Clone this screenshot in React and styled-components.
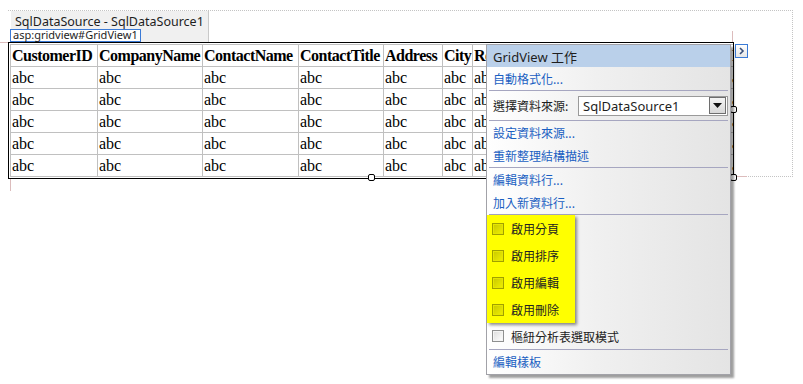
import React from 'react';
import styled, { createGlobalStyle } from 'styled-components';

const GlobalStyle = createGlobalStyle`
  html, body {
    margin: 0;
    padding: 0;
    background: #ffffff;
  }
  body {
    font-family: "Noto Sans", "Noto Sans CJK TC", sans-serif;
  }
`;

const columns = [
  { name: 'CustomerID', width: 87 },
  { name: 'CompanyName', width: 105 },
  { name: 'ContactName', width: 96 },
  { name: 'ContactTitle', width: 85 },
  { name: 'Address', width: 59 },
  { name: 'City', width: 30 },
  { name: 'Region', width: 60 },
  { name: 'PostalCode', width: 84 },
  { name: 'Country', width: 62 },
  { name: 'Phone', width: 52 },
  { name: 'Fax', width: 40 },
];

const tableWidth = columns.reduce((s, c) => s + c.width, 0);

const rows = [0, 1, 2, 3, 4];

export default function App() {
  return (
    <Page>
      <GlobalStyle />
      <Canvas>
        <Guide style={{ left: -8, top: 31, width: 10, height: 1 }} />
        <Guide style={{ left: 724, top: 20, width: 1, height: 12 }} />
        <Guide style={{ left: 727, top: 165, width: 12, height: 1 }} />
        <Guide style={{ left: 2, top: 167, width: 1, height: 13 }} />

        <Tab>
          SqlDataSource - SqlDataSource1
          <Tag>asp:gridview#GridView1</Tag>
        </Tab>

        <FrameWrap>
          <Frame>
            <Grid style={{ width: tableWidth }}>
              <colgroup>
                {columns.map((c) => (
                  <col key={c.name} style={{ width: c.width }} />
                ))}
              </colgroup>
              <thead>
                <tr>
                  {columns.map((c) => (
                    <th key={c.name}>{c.name}</th>
                  ))}
                </tr>
              </thead>
              <tbody>
                {rows.map((r) => (
                  <tr key={r}>
                    {columns.map((c) => (
                      <td key={c.name}>abc</td>
                    ))}
                  </tr>
                ))}
              </tbody>
            </Grid>
          </Frame>
          <Handle $x={360} $y={132} />
          <Handle $x={722} $y={64} />
          <Handle $x={722} $y={132} />
        </FrameWrap>
      </Canvas>

      <SmartTag>
        <svg width="11" height="12" viewBox="0 0 11 12">
          <polyline points="4,3 7,6 4,9" fill="none" stroke="#3a4f78" strokeWidth="1.6" />
        </svg>
      </SmartTag>

      <TaskPanel>
        <PanelHeader>GridView 工作</PanelHeader>
        <LinkItem>自動格式化...</LinkItem>
        <Separator />
        <SelectRow>
          <SelectLabel>選擇資料來源:</SelectLabel>
          <Select>
            <span>SqlDataSource1</span>
            <DropButton>
              <svg width="9" height="5" viewBox="0 0 9 5">
                <polygon points="0,0 9,0 4.5,5" fill="#111" />
              </svg>
            </DropButton>
          </Select>
        </SelectRow>
        <Separator />
        <LinkItem>設定資料來源...</LinkItem>
        <LinkItem>重新整理結構描述</LinkItem>
        <Separator />
        <LinkItem>編輯資料行...</LinkItem>
        <LinkItem>加入新資料行...</LinkItem>
        <Separator />
        <Highlight>
          {['啟用分頁', '啟用排序', '啟用編輯', '啟用刪除'].map((t) => (
            <CheckRow key={t} $h={27}>
              <CheckBox $yellow />
              {t}
            </CheckRow>
          ))}
        </Highlight>
        <CheckRow $h={26}>
          <CheckBox />
          樞紐分析表選取模式
        </CheckRow>
        <Separator />
        <LinkItem>編輯樣板</LinkItem>
      </TaskPanel>
    </Page>
  );
}

const Page = styled.div`
  position: relative;
  width: 803px;
  height: 384px;
  overflow: hidden;
  padding-top: 10px;
  box-sizing: border-box;
`;

const Canvas = styled.div`
  position: relative;
  margin-left: 8px;
  width: 784px;
  height: 165px;
  border-top: 1px dotted #c4c4c4;
  border-right: 1px dotted #c4c4c4;
  border-bottom: 1px dotted #c4c4c4;
`;

const Guide = styled.div`
  position: absolute;
  background: #dcbcbc;
`;

const Tab = styled.div`
  position: relative;
  margin-left: 3px;
  width: 193px;
  height: 31px;
  padding-left: 4px;
  background: #f0f0f0;
  border-right: 1px solid #c9c9c9;
  font-family: "Noto Sans", sans-serif;
  font-size: 12.5px;
  line-height: 22px;
  color: #1e1e1e;
  white-space: nowrap;
`;

const Tag = styled.div`
  position: absolute;
  left: -1px;
  bottom: 0;
  height: 11px;
  padding: 0 2px;
  border: 1px solid #3a7ad6;
  background: #ffffff;
  font-family: "Noto Sans", sans-serif;
  font-size: 11px;
  line-height: 10px;
  color: #1e1e1e;
  white-space: nowrap;
`;

const FrameWrap = styled.div`
  position: relative;
  width: 726px;
`;

const Frame = styled.div`
  width: 726px;
  height: 137px;
  padding: 1px 0 0 1px;
  box-sizing: border-box;
  border: 1px solid #000000;
  background: #ffffff;
  overflow: hidden;
`;

const Grid = styled.table`
  table-layout: fixed;
  border-collapse: collapse;
  font-family: "Liberation Serif", "Times New Roman", serif;
  font-size: 16px;
  color: #000000;

  th, td {
    border: 1px solid #c0c0c0;
    padding: 1px 1px;
    line-height: 19px;
    white-space: nowrap;
    text-align: left;
    overflow: hidden;
  }

  th {
    font-weight: bold;
    letter-spacing: -0.5px;
  }
`;

const Handle = styled.div`
  position: absolute;
  left: ${(p) => p.$x}px;
  top: ${(p) => p.$y}px;
  width: 5px;
  height: 5px;
  border: 1px solid #000000;
  border-radius: 2px;
  background: #ffffff;
`;

const SmartTag = styled.div`
  position: absolute;
  left: 735px;
  top: 44px;
  width: 11px;
  height: 12px;
  border: 1px solid #3a7ad6;
  background: linear-gradient(#ffffff, #e6e6e6);
  display: flex;
  align-items: center;
  justify-content: center;
`;

const TaskPanel = styled.div`
  position: absolute;
  left: 486px;
  top: 44px;
  width: 243px;
  display: flex;
  flex-direction: column;
  padding-bottom: 1px;
  border: 1px solid #a2a2a8;
  background: linear-gradient(to right, #ffffff 0%, #f0f0f0 45%, #e4e4e4 100%);
  box-shadow: 3px 3px 2px rgba(0, 0, 0, 0.38);
  font-family: "Noto Sans CJK TC", "Noto Sans", sans-serif;
  font-size: 12px;
`;

const PanelHeader = styled.div`
  height: 22px;
  padding-left: 6px;
  display: flex;
  align-items: center;
  background: #bad0ea;
  font-family: "Noto Sans", "Noto Sans CJK TC", sans-serif;
  font-size: 13px;
  color: #1e1e1e;
`;

const LinkItem = styled.div`
  height: 23px;
  padding-left: 6px;
  display: flex;
  align-items: center;
  color: #1a5fc2;
`;

const Separator = styled.div`
  height: 1px;
  margin: 0 2px;
  background: #a6a6c0;
`;

const SelectRow = styled.div`
  height: 29px;
  padding-left: 6px;
  display: flex;
  align-items: center;
  color: #1e1e1e;
`;

const SelectLabel = styled.div`
  width: 85px;
`;

const Select = styled.div`
  width: 144px;
  height: 18px;
  padding-left: 4px;
  border: 1px solid #9a9a9a;
  background: #ffffff;
  display: flex;
  align-items: center;
  justify-content: space-between;
  font-family: "Noto Sans", sans-serif;
  font-size: 13px;
  color: #1e1e1e;
`;

const DropButton = styled.div`
  width: 15px;
  height: 15px;
  margin-right: 1px;
  border: 1px solid #6e6e6e;
  background: linear-gradient(#f4f4f4, #d8d8d8);
  display: flex;
  align-items: center;
  justify-content: center;
`;

const Highlight = styled.div`
  position: relative;
  z-index: 1;
  width: 88px;
  background: #ffff00;
  box-shadow: 2px 2px 3px rgba(0, 0, 0, 0.45);
`;

const CheckRow = styled.div`
  height: ${(p) => p.$h}px;
  padding-left: 5px;
  display: flex;
  align-items: center;
  gap: 7px;
  color: #222222;
  white-space: nowrap;
`;

const CheckBox = styled.span`
  flex: none;
  width: 10px;
  height: 10px;
  border: 1px solid ${(p) => (p.$yellow ? '#a0a000' : '#8e8f8f')};
  background: ${(p) =>
    p.$yellow
      ? 'linear-gradient(135deg, #c8c800, #f0f000)'
      : 'linear-gradient(135deg, #dcdcdc, #ffffff)'};
  box-shadow: inset 0 0 0 1px ${(p) => (p.$yellow ? '#e6e600' : '#f4f4f4')};
`;
